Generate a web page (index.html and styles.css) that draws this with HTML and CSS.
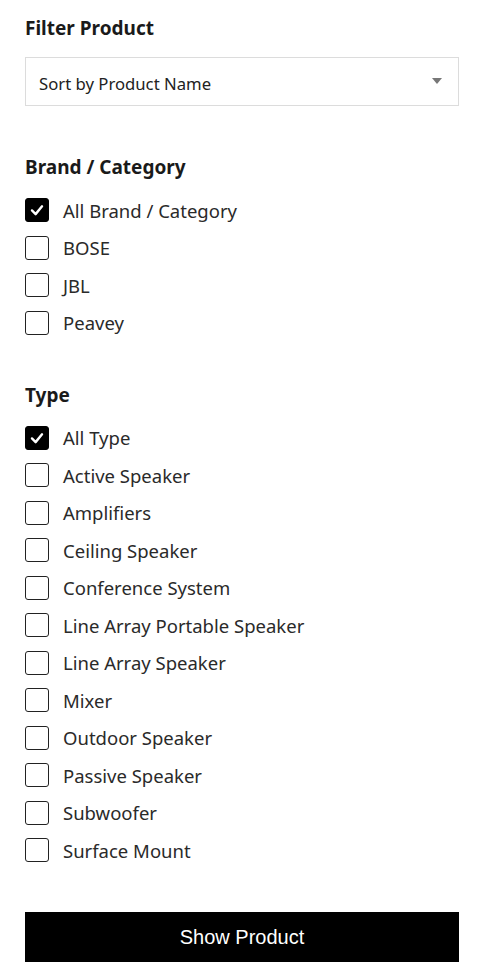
FILE: index.html
```html
<!DOCTYPE html>
<html>
<head>
<meta charset="utf-8">
<link rel="stylesheet" href="styles.css">
</head>
<body>
<div class="filter">
  <h2 class="title">Filter Product</h2>
  <div class="select">
    <span>Sort by Product Name</span>
    <span class="caret"></span>
  </div>

  <h3 class="group-title brand-title">Brand / Category</h3>
  <ul class="list">
    <li class="item"><span class="box checked"><svg viewBox="0 0 24 24" width="24" height="24"><path d="M6.5 12.5l4 4 7-8.5" fill="none" stroke="#fff" stroke-width="2.6" stroke-linecap="round" stroke-linejoin="round"/></svg></span>All Brand / Category</li>
    <li class="item"><span class="box"></span>BOSE</li>
    <li class="item"><span class="box"></span>JBL</li>
    <li class="item"><span class="box"></span>Peavey</li>
  </ul>

  <h3 class="group-title type-title">Type</h3>
  <ul class="list">
    <li class="item"><span class="box checked"><svg viewBox="0 0 24 24" width="24" height="24"><path d="M6.5 12.5l4 4 7-8.5" fill="none" stroke="#fff" stroke-width="2.6" stroke-linecap="round" stroke-linejoin="round"/></svg></span>All Type</li>
    <li class="item"><span class="box"></span>Active Speaker</li>
    <li class="item"><span class="box"></span>Amplifiers</li>
    <li class="item"><span class="box"></span>Ceiling Speaker</li>
    <li class="item"><span class="box"></span>Conference System</li>
    <li class="item"><span class="box"></span>Line Array Portable Speaker</li>
    <li class="item"><span class="box"></span>Line Array Speaker</li>
    <li class="item"><span class="box"></span>Mixer</li>
    <li class="item"><span class="box"></span>Outdoor Speaker</li>
    <li class="item"><span class="box"></span>Passive Speaker</li>
    <li class="item"><span class="box"></span>Subwoofer</li>
    <li class="item"><span class="box"></span>Surface Mount</li>
  </ul>

  <button class="btn">Show Product</button>
</div>
</body>
</html>
```
FILE: styles.css
```css
html, body {
  margin: 0;
  padding: 0;
  background: #fff;
}
body {
  font-family: "Noto Sans", "Open Sans", sans-serif;
  color: #222;
}
.filter {
  padding: 16px 25px 0 25px;
  display: flex;
  flex-direction: column;
}
.title {
  margin: 0;
  font-size: 19px;
  font-weight: 700;
  line-height: 24px;
  color: #1a1a1a;
}
.select {
  margin-top: 17px;
  height: 49px;
  box-sizing: border-box;
  border: 1px solid #dcdcdc;
  display: flex;
  align-items: center;
  justify-content: space-between;
  padding: 0 16px 0 13px;
  font-size: 16.7px;
  color: #222;
}
.select span:first-child {
  margin-top: 3px;
}
.caret {
  width: 0;
  height: 0;
  border-left: 5px solid transparent;
  border-right: 5px solid transparent;
  border-top: 6px solid #777;
  margin-top: -2px;
}
.group-title {
  margin: 0;
  font-size: 19px;
  font-weight: 700;
  line-height: 24px;
  color: #1a1a1a;
}
.brand-title {
  margin-top: 49px;
}
.type-title {
  margin-top: 48px;
}
.list {
  list-style: none;
  margin: 19px 0 0 0;
  padding: 0;
  display: flex;
  flex-direction: column;
  gap: 13.5px;
}
.item {
  display: flex;
  align-items: center;
  height: 24px;
  font-size: 18.5px;
  color: #2a2a2a;
}
.box {
  width: 24px;
  height: 24px;
  box-sizing: border-box;
  border: 1.5px solid #222;
  border-radius: 3px;
  margin-right: 14px;
  flex: none;
  display: flex;
  align-items: center;
  justify-content: center;
}
.box.checked {
  background: #000;
  border-color: #000;
}
.box svg {
  display: block;
}
.btn {
  margin-top: 50px;
  height: 50px;
  border: none;
  background: #000;
  color: #fff;
  font-family: "Liberation Sans", Arial, sans-serif;
  font-size: 20px;
  cursor: pointer;
}
```
